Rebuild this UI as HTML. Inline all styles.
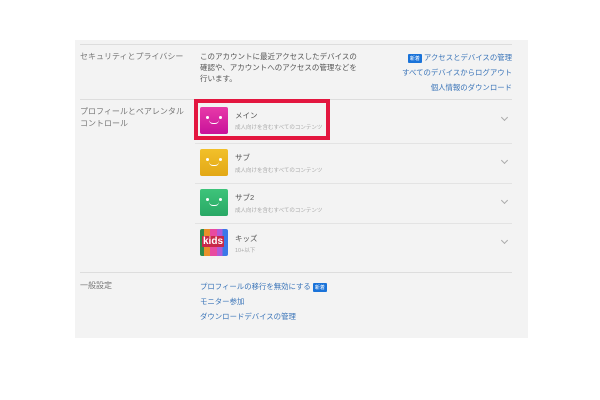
<!DOCTYPE html>
<html><head><meta charset="utf-8"><style>
*{margin:0;padding:0;box-sizing:border-box}
body{width:600px;height:400px;background:#fff;position:relative;font-family:"Liberation Sans","Noto Sans CJK JP",sans-serif;overflow:hidden}
.panel{position:absolute;left:75px;top:40px;width:453px;height:298px;background:#f3f3f3}
.a{position:absolute;white-space:nowrap}
.hl{position:absolute;height:1px;background:#ddd}
.lab{font-size:8px;color:#777;line-height:12px}
.desc{font-size:7.5px;color:#555;line-height:11px}
.lk{font-size:7.4px;color:#3a74b8}
.badge{display:inline-block;background:#1a73d9;color:#fff;font-size:5px;padding:1px 2px;border-radius:1px;vertical-align:middle}
.av{position:absolute;width:28px;height:27px;border-radius:2px}
.av i{position:absolute;width:3px;height:3px;border-radius:50%;background:#fff;top:9px}
.av b{position:absolute;left:9px;top:13px;width:10px;height:4px;border-bottom:1.5px solid #fff;border-radius:0 0 6px 6px}
.nm{font-size:7.5px;color:#555;font-weight:normal}
.sb{font-size:5.5px;color:#aaa}
.ch{position:absolute;width:5px;height:5px;border-right:1px solid #aaa;border-bottom:1px solid #aaa;transform:rotate(45deg);left:502px}
</style></head><body>
<div class="panel"></div>
<div class="hl" style="left:80px;top:44px;width:432px"></div>
<div class="a lab" style="left:80px;top:51px">セキュリティとプライバシー</div>
<div class="a desc" style="left:200px;top:51px">このアカウントに最近アクセスしたデバイスの<br>確認や、アカウントへのアクセスの管理などを<br>行います。</div>
<div class="a lk" style="right:88px;top:52px"><span class="badge">新着</span> アクセスとデバイスの管理</div>
<div class="a lk" style="right:88px;top:67px">すべてのデバイスからログアウト</div>
<div class="a lk" style="right:88px;top:82px">個人情報のダウンロード</div>
<div class="hl" style="left:80px;top:99px;width:432px"></div>
<div class="a lab" style="left:80px;top:106px">プロフィールとペアレンタル<br>コントロール</div>

<div class="av" style="left:200px;top:107px;background:linear-gradient(#e83aa8,#c8129a)"><i style="left:6px"></i><i style="left:19px"></i><b></b></div>
<div class="a nm" style="left:235px;top:110px">メイン</div>
<div class="a sb" style="left:235px;top:123px">成人向けを含むすべてのコンテンツ</div>
<div class="ch" style="top:115px"></div>
<div class="a" style="left:194px;top:99px;width:136px;height:41px;border:4px solid #e3163f"></div>
<div class="hl" style="left:195px;top:143px;width:317px;background:#e3e3e3"></div>

<div class="av" style="left:200px;top:149px;background:linear-gradient(#f2c02a,#e2a816)"><i style="left:6px"></i><i style="left:19px"></i><b></b></div>
<div class="a nm" style="left:235px;top:152px">サブ</div>
<div class="a sb" style="left:235px;top:166px">成人向けを含むすべてのコンテンツ</div>
<div class="ch" style="top:158px"></div>
<div class="hl" style="left:195px;top:183px;width:317px;background:#e3e3e3"></div>

<div class="av" style="left:200px;top:189px;background:linear-gradient(#3ec47a,#28a865)"><i style="left:6px"></i><i style="left:19px"></i><b></b></div>
<div class="a nm" style="left:235px;top:192px">サブ2</div>
<div class="a sb" style="left:235px;top:206px">成人向けを含むすべてのコンテンツ</div>
<div class="ch" style="top:198px"></div>
<div class="hl" style="left:195px;top:223px;width:317px;background:#e3e3e3"></div>

<div class="av" style="left:200px;top:229px;background:linear-gradient(90deg,#2f8a4a 0 15%,#e8902a 15% 35%,#e84aa0 35% 60%,#b05ad8 60% 80%,#3a78e8 80%);overflow:hidden"><span style="position:absolute;left:2px;top:7px;font-size:10px;font-weight:bold;color:#fff;background:#c82848;line-height:11px;padding:0 1px">kids</span></div>
<div class="a nm" style="left:235px;top:233px">キッズ</div>
<div class="a sb" style="left:235px;top:246px">10+以下</div>
<div class="ch" style="top:238px"></div>

<div class="hl" style="left:80px;top:272px;width:432px"></div>
<div class="a lab" style="left:80px;top:280px">一般設定</div>
<div class="a lk" style="left:200px;top:281px">プロフィールの移行を無効にする <span class="badge">新着</span></div>
<div class="a lk" style="left:200px;top:296px">モニター参加</div>
<div class="a lk" style="left:200px;top:311px">ダウンロードデバイスの管理</div>
</body></html>
